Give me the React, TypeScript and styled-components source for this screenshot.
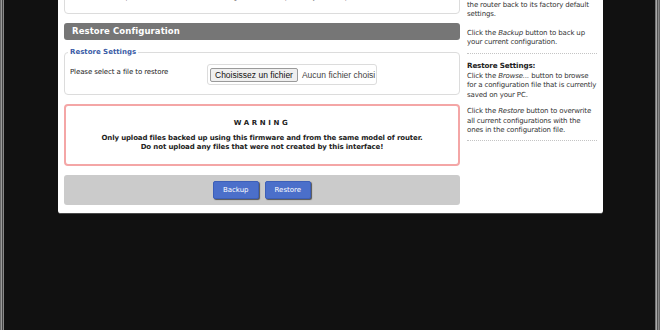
import React from "react";
import styled, { createGlobalStyle } from "styled-components";

const Global = createGlobalStyle`
  html, body { margin: 0; padding: 0; background: #111; overflow: hidden; }
  #root { width: 660px; height: 330px; }
`;

const Frame = styled.div`
  width: 660px;
  height: 330px;
  overflow: hidden;
  background: linear-gradient(
    to right,
    #6a6a6a 0 1px, #9a9a9a 1px 2px, #454545 2px 3px, #888 3px 4px,
    #111 4px 655px,
    #777 655px 656px, #aaa 656px 657px, #555 657px 658px, #8a8a8a 658px 659px, #666 659px
  );
  font-family: "DejaVu Sans", Verdana, sans-serif;
  color: #222;
`;

const Panel = styled.div`
  margin: -24px 0 0 58px;
  width: 545px;
  box-sizing: border-box;
  padding: 6px 6px 8px;
  background: #fff;
  border-bottom: 1px solid #4a4a4a;
  border-radius: 0 0 3px 3px;
  display: flex;
  gap: 7px;
`;

const Main = styled.div`
  width: 396px;
  display: flex;
  flex-direction: column;
  gap: 9px;
`;

const Fieldset = styled.fieldset<{ $top?: number; $bottom?: number }>`
  margin: 0;
  padding: ${(p) => p.$top ?? 7}px 5px ${(p) => p.$bottom ?? 9}px;
  border: 1px solid #dcdcdc;
  border-radius: 4px;
  min-width: 0;
`;

const Legend = styled.legend`
  padding: 0 2px;
  margin-left: -2px;
  color: #3a5ba6;
  font-weight: bold;
  font-size: 7px;
  line-height: 9px;
`;

const Text = styled.div`
  font-size: 7px;
  line-height: 9px;
  letter-spacing: -0.1px;
  white-space: nowrap;
`;

const Header = styled.div`
  height: 17px;
  margin-bottom: -1px;
  background: #767676;
  border-radius: 3px;
  color: #fff;
  font-weight: bold;
  font-size: 8.5px;
  letter-spacing: 0.1px;
  line-height: 17px;
  padding-left: 8px;
`;

const Row = styled.div`
  display: flex;
  align-items: flex-start;
`;

const Label = styled(Text)`
  width: 137px;
  margin-top: 3.5px;
`;

const FileBox = styled.div`
  width: 170px;
  height: 21px;
  box-sizing: border-box;
  border: 1px solid #dcdcdc;
  border-radius: 3px;
  display: flex;
  align-items: center;
  gap: 4px;
  padding-left: 2px;
  overflow: hidden;
  white-space: nowrap;
  font-family: "Liberation Sans", Arial, sans-serif;
  font-size: 8.5px;
  color: #444;
`;

const FileButton = styled.span`
  height: 14px;
  box-sizing: border-box;
  padding: 0 4px;
  background: #efefef;
  border: 1px solid #9a9a9a;
  border-radius: 2px;
  display: inline-flex;
  align-items: center;
  color: #111;
  flex-shrink: 0;
`;

const Warning = styled.div`
  border: 2px solid #f4a6a6;
  border-radius: 4px;
  padding: 12px 8px;
  text-align: center;
  font-weight: bold;
  font-size: 7px;
  line-height: 9px;
  letter-spacing: -0.13px;
  color: #222;
`;

const WarningTitle = styled.div`
  letter-spacing: 2.6px;
  line-height: 10px;
  margin-bottom: 6px;
`;

const ButtonBar = styled.div`
  height: 30px;
  background: #cbcbcb;
  border-radius: 3px;
  display: flex;
  align-items: center;
  justify-content: center;
  gap: 6px;
`;

const Button = styled.button`
  height: 18px;
  padding: 0 9px;
  background: #4b6fca;
  border: 1px solid #3d5fb8;
  border-radius: 2px;
  box-shadow: 1px 1px 1px #555;
  color: #fff;
  font-family: "DejaVu Sans", Verdana, sans-serif;
  font-size: 7px;
  line-height: 16px;
`;

const Help = styled.div`
  width: 130px;
  font-size: 7px;
  line-height: 9.3px;
  letter-spacing: -0.15px;
  color: #333;
  white-space: nowrap;
`;

const HelpPara = styled.p<{ $gap?: number }>`
  margin: 0 0 ${(p) => p.$gap ?? 0}px;
`;

const HelpTitle = styled.div`
  margin-top: 6.5px;
  margin-bottom: 2px;
  font-weight: bold;
  font-size: 7.2px;
  color: #222;
`;

const Divider = styled.hr<{ $before: number }>`
  margin: ${(p) => p.$before}px 0 0;
  border: 0;
  border-top: 1px dotted #c4c4c4;
  height: 0;
`;

export default function App() {
  return (
    <>
      <Global />
      <Frame>
        <Panel>
          <Main>
            <Fieldset $top={2} $bottom={11}>
              <Legend>Backup Settings</Legend>
              <Text>
                Click the "Backup" button to download the configuration backup file to your computer.
              </Text>
            </Fieldset>
            <Header>Restore Configuration</Header>
            <Fieldset>
              <Legend>Restore Settings</Legend>
              <Row>
                <Label>Please select a file to restore</Label>
                <FileBox>
                  <FileButton>Choisissez un fichier</FileButton>
                  <span>Aucun fichier choisi</span>
                </FileBox>
              </Row>
            </Fieldset>
            <Warning>
              <WarningTitle>WARNING</WarningTitle>
              <div>Only upload files backed up using this firmware and from the same model of router.</div>
              <div>Do not upload any files that were not created by this interface!</div>
            </Warning>
            <ButtonBar>
              <Button type="button">Backup</Button>
              <Button type="button">Restore</Button>
            </ButtonBar>
          </Main>
          <Help>
            <HelpPara $gap={10}>
              You may backup your current
              <br />
              configuration in case you need to reset
              <br />
              the router back to its factory default
              <br />
              settings.
            </HelpPara>
            <HelpPara>
              Click the <i>Backup</i> button to back up
              <br />
              your current configuration.
            </HelpPara>
            <Divider $before={5.5} />
            <HelpTitle>Restore Settings:</HelpTitle>
            <HelpPara $gap={7.5}>
              Click the <i>Browse...</i> button to browse
              <br />
              for a configuration file that is currently
              <br />
              saved on your PC.
            </HelpPara>
            <HelpPara>
              Click the <i>Restore</i> button to overwrite
              <br />
              all current configurations with the
              <br />
              ones in the configuration file.
            </HelpPara>
            <Divider $before={5} />
          </Help>
        </Panel>
      </Frame>
    </>
  );
}
